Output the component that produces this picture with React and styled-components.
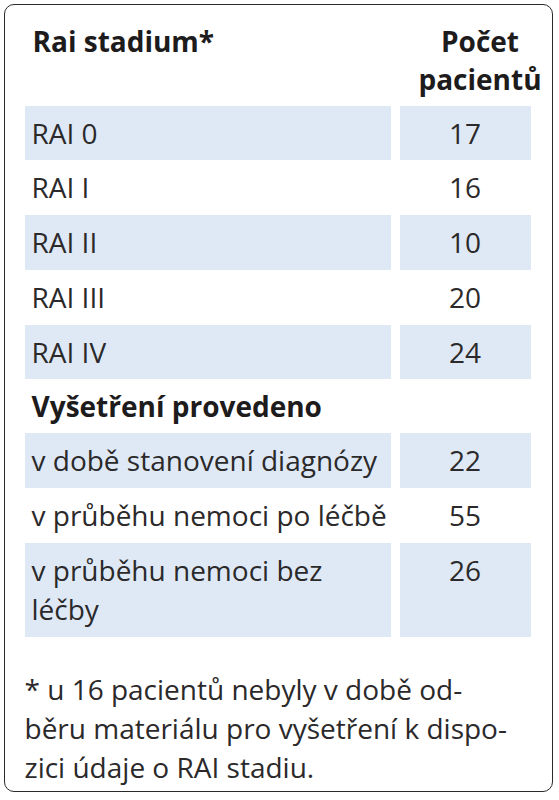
import React from "react";
import styled, { createGlobalStyle } from "styled-components";

const GlobalStyle = createGlobalStyle`
  html, body { margin: 0; padding: 0; background: #ffffff; }
  body { font-family: "Open Sans", "Noto Sans", sans-serif; color: #2b292a; }
`;

const Frame = styled.div`
  box-sizing: border-box;
  width: 549px;
  height: 788px;
  margin: 4px 6px 8px 4px;
  border: 1.5px solid #2a2a2a;
  border-radius: 10px;
  padding: 17px 20px 0 19.5px;
  display: flex;
  flex-direction: column;
`;

const Table = styled.div`
  display: grid;
  grid-template-columns: 366px 131px;
  column-gap: 9px;
  font-size: 28px;
  line-height: 39px;
`;

const HeadCell = styled.div`
  font-weight: 700;
  color: #1d1b1c;
  line-height: 38px;
  padding: 0 0 7.5px ${(p) => (p.$num ? "0" : "8px")};
  text-align: ${(p) => (p.$num ? "center" : "left")};
  margin: ${(p) => (p.$num ? "0 -12px 0 18px" : "0")};
`;

const Cell = styled.div`
  background: ${(p) => (p.$shade ? "#dfe9f6" : "transparent")};
  padding: 8px 2px 7.75px ${(p) => (p.$num ? "2px" : "7px")};
  text-align: ${(p) => (p.$num ? "center" : "left")};
`;

const SubHead = styled.div`
  grid-column: 1 / -1;
  font-weight: 700;
  color: #1d1b1c;
  padding: 8px 2px 7px 7px;
`;

const Note = styled.p`
  margin: 33px 0 0 0;
  font-size: 28px;
  line-height: 39px;
`;

const stages = [
  ["RAI 0", 17],
  ["RAI I", 16],
  ["RAI II", 10],
  ["RAI III", 20],
  ["RAI IV", 24],
];

const exams = [
  ["v době stanovení diagnózy", 22],
  ["v průběhu nemoci po léčbě", 55],
  ["v průběhu nemoci bez léčby", 26],
];

export default function App() {
  return (
    <>
      <GlobalStyle />
      <Frame>
        <Table>
          <HeadCell>Rai stadium*</HeadCell>
          <HeadCell $num>
            Počet
            <br />
            pacientů
          </HeadCell>
          {stages.map(([label, n], i) => (
            <React.Fragment key={label}>
              <Cell $shade={i % 2 === 0}>{label}</Cell>
              <Cell $shade={i % 2 === 0} $num>
                {n}
              </Cell>
            </React.Fragment>
          ))}
          <SubHead>Vyšetření provedeno</SubHead>
          {exams.map(([label, n], i) => (
            <React.Fragment key={label}>
              <Cell $shade={i % 2 === 0}>{label}</Cell>
              <Cell $shade={i % 2 === 0} $num>
                {n}
              </Cell>
            </React.Fragment>
          ))}
        </Table>
        <Note>
          * u 16 pacientů nebyly v době od-
          <br />
          běru materiálu pro vyšetření k dispo-
          <br />
          zici údaje o RAI stadiu.
        </Note>
      </Frame>
    </>
  );
}
